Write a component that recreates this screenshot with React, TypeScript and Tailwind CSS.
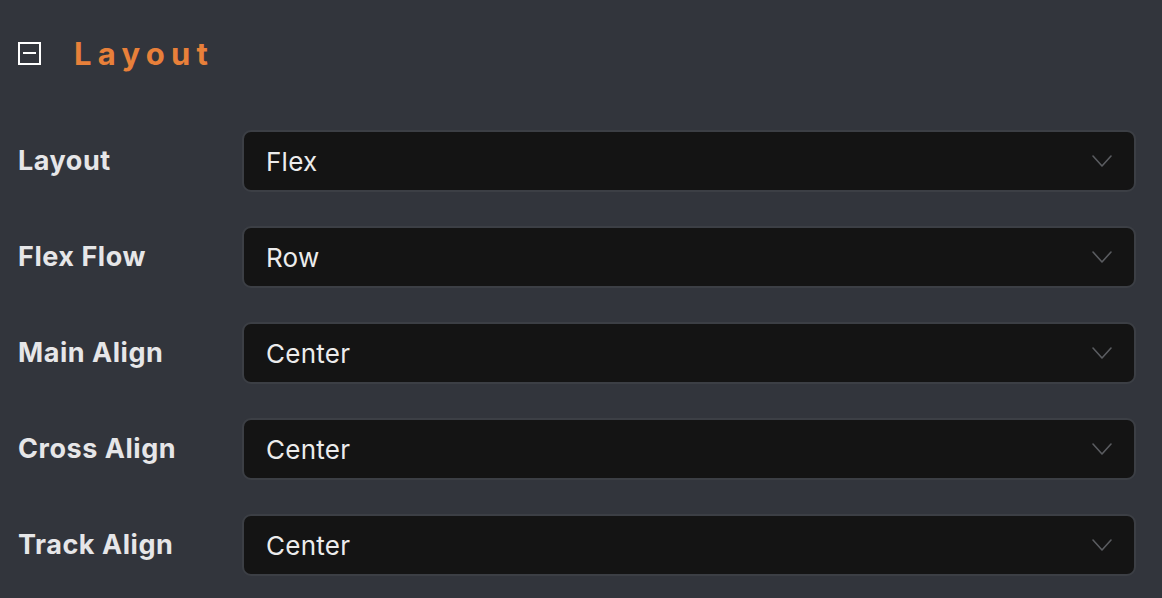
const rows = [
  { label: "Layout", value: "Flex" },
  { label: "Flex Flow", value: "Row" },
  { label: "Main Align", value: "Center" },
  { label: "Cross Align", value: "Center" },
  { label: "Track Align", value: "Center" },
];

function Chevron() {
  return (
    <svg width="20" height="12" viewBox="0 0 20 12" fill="none" className="shrink-0">
      <path d="M1 1l9 10 9-10" stroke="#5a5c60" strokeWidth="1.6" strokeLinecap="round" strokeLinejoin="round" />
    </svg>
  );
}

export default function App() {
  return (
    <div
      className="w-[1162px] h-[598px] bg-[#32353c] overflow-hidden pl-[18px] pr-[26px]"
      style={{ fontFamily: "Inter, 'Noto Sans', sans-serif" }}
    >
      {/* section header */}
      <div className="flex items-center h-[54px] mt-[26px]">
        <div className="w-[23px] h-[23px] border-2 border-white flex items-center justify-center">
          <div className="w-[13px] h-[2px] bg-white" />
        </div>
        <span className="ml-[33px] text-[31px] font-bold tracking-[0.2em] text-[#e8803a] leading-none">
          Layout
        </span>
      </div>

      <div className="mt-[50px] flex flex-col gap-[34px]">
        {rows.map((r) => (
          <div key={r.label} className="flex items-center">
            <div className="w-[224px] shrink-0 text-[27px] font-bold tracking-[0.02em] text-[#e6e6e8]">{r.label}</div>
            <div className="flex-1 h-[62px] rounded-[9px] border-2 border-[#3c3f45] bg-[#141414] flex items-center justify-between pl-[22px] pr-[22px]">
              <span className="text-[26px] tracking-[0.01em] text-[#ececec]">{r.value}</span>
              <Chevron />
            </div>
          </div>
        ))}
      </div>
    </div>
  );
}
